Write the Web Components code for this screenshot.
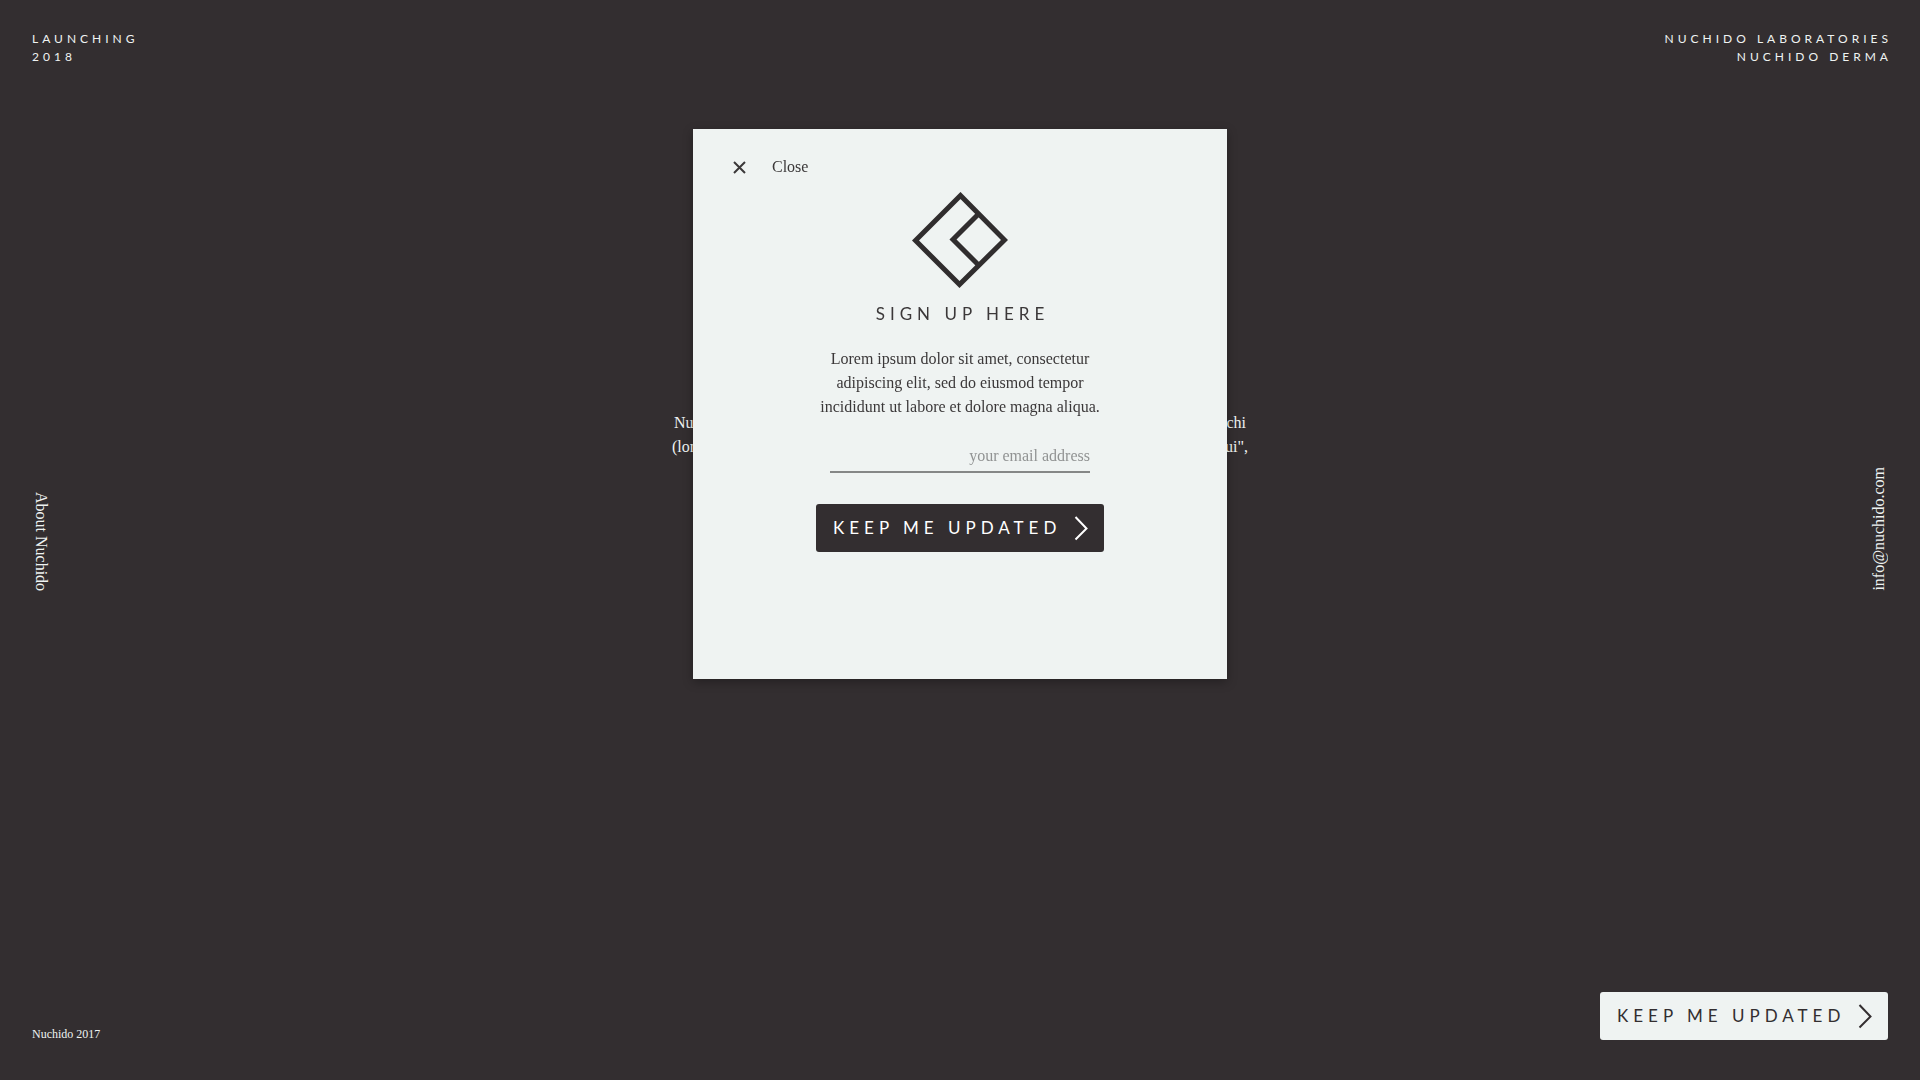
<!DOCTYPE html>
<html lang="en">
<head>
<meta charset="utf-8">
<title>Nuchido</title>
<style>
  :root {
    --ink: #332e30;
    --paper: #eff3f2;
    --serif: "Liberation Serif", serif;
    --sans: Lato, sans-serif;
  }
  body { margin: 0; background: var(--ink); color: var(--paper); font: 16px/24px var(--serif); }
</style>
</head>
<body>
<nuchido-page></nuchido-page>
<script>
class NuchidoElement extends HTMLElement {
  constructor() {
    super();
    this.attachShadow({ mode: "open" }).innerHTML = this.constructor.markup;
  }
}

class BrandLogo extends NuchidoElement {
  static markup = `
    <style>
      :host { display: block; width: 96px; height: 96px; }
      svg { display: block; width: 100%; height: 100%; }
    </style>
    <svg viewBox="0 0 96 96" fill="none" stroke="#302d2e" stroke-width="5" aria-hidden="true">
      <path d="M48.500 3.500 92.500 48 47.500 92.500 3.500 48.500Z"/>
      <path d="M66.500 22 41 47.500 66.500 73"/>
    </svg>`;
}

class CaptionText extends NuchidoElement {
  static markup = `
    <style>
      :host { display: block; font: 12px/18px var(--sans); letter-spacing: 4px; text-transform: uppercase; }
    </style>
    <slot></slot>`;
}

class SideLink extends NuchidoElement {
  static markup = `
    <style>
      :host { display: block; writing-mode: vertical-rl; line-height: 18px; }
      :host([up]) { transform: rotate(180deg); }
      a { color: inherit; text-decoration: none; }
    </style>
    <a href="#"><slot></slot></a>`;
  connectedCallback() {
    this.shadowRoot.querySelector("a").href = this.getAttribute("href") || "#";
  }
}

class UpdateButton extends NuchidoElement {
  static markup = `
    <style>
      :host { display: block; width: 288px; }
      button {
        display: flex; align-items: center; justify-content: space-between;
        box-sizing: border-box; width: 100%; height: 48px; padding: 0 16px 0 17px;
        border: 0; border-radius: 3px; cursor: pointer;
        background: var(--ink); color: #fff;
        font: 17px/24px var(--sans); letter-spacing: 5px; white-space: nowrap;
      }
      :host([light]) button { background: var(--paper); color: var(--ink); }
      svg { width: 14px; height: 26px; flex: none; }
    </style>
    <button type="button"><slot></slot>
      <svg viewBox="0 0 14 26" fill="none" stroke="currentColor" stroke-width="2" aria-hidden="true"><path d="M1.500 2 12.500 13.500 1.500 24.500"/></svg>
    </button>`;
}

class BrandIntro extends NuchidoElement {
  static markup = `
    <style>
      :host { display: flex; flex-direction: column; align-items: center; }
      div { display: flex; justify-content: space-between; width: 572px; }
      div + div { width: 576px; }
    </style>
    <div><span>Nu</span><span>chi</span></div>
    <div><span>(lon</span><span>ui",</span></div>`;
}

class SignupDialog extends NuchidoElement {
  static markup = `
    <style>
      :host {
        display: flex; flex-direction: column; align-items: center;
        box-sizing: border-box; width: 534px; min-height: 550px; padding: 26px 40px;
        background: var(--paper); color: #3b3839;
        box-shadow: 0 3px 10px rgba(0, 0, 0, .3);
      }
      .close {
        display: flex; align-items: center; gap: 26px; align-self: flex-start;
        padding: 0; border: 0; background: none; color: inherit; font: inherit; cursor: pointer;
      }
      .close svg { width: 13px; height: 13px; }
      brand-logo { margin-top: 13px; }
      h1 { margin: 14px 0 0; font: 17px/24px var(--sans); letter-spacing: 5px; padding-left: 5px; }
      p { margin: 21px 0 0; width: 288px; text-align: center; }
      input {
        box-sizing: border-box; width: 260px; height: 30px; margin: 24px 0 31px; padding: 0 0 2px;
        border: 0; border-bottom: 2px solid #858787; border-radius: 0; outline: 0;
        background: none; color: inherit; font: inherit; text-align: right;
      }
      input::placeholder { color: #919393; opacity: 1; }
    </style>
    <button class="close" type="button">
      <svg viewBox="0 0 13 13" stroke="currentColor" stroke-width="2" aria-hidden="true"><path d="M1 1 12 12M12 1 1 12"/></svg>Close
    </button>
    <brand-logo></brand-logo>
    <h1>SIGN UP HERE</h1>
    <p>Lorem ipsum dolor sit amet, consectetur adipiscing elit, sed do eiusmod tempor incididunt ut labore et dolore magna aliqua.</p>
    <input type="email" aria-label="your email address" placeholder="your email address">
    <update-button>KEEP ME UPDATED</update-button>`;
}

class NuchidoPage extends NuchidoElement {
  static markup = `
    <style>
      :host {
        display: grid; grid-template-rows: 1fr auto 1fr;
        box-sizing: border-box; min-height: 100vh; padding: 30px 32px 40px;
      }
      header { display: grid; grid-template-columns: 1fr auto 1fr; }
      header brand-intro { align-self: end; padding-bottom: 8px; }
      .right { text-align: right; margin-right: -4px; }
      nav { display: flex; justify-content: space-between; align-items: flex-end; padding-bottom: 12px; min-height: 120px; }
      footer { display: flex; justify-content: space-between; align-items: flex-end; }
      small { font-size: 12px; line-height: 12px; }
      .overlay { position: fixed; inset: 0; display: flex; justify-content: center; align-items: flex-start; padding-top: 129px; pointer-events: none; }
      signup-dialog { pointer-events: auto; }
    </style>
    <header>
      <caption-text>Launching<br>2018</caption-text>
      <brand-intro></brand-intro>
      <caption-text class="right">Nuchido Laboratories<br>Nuchido Derma</caption-text>
    </header>
    <nav>
      <side-link href="#about">About Nuchido</side-link>
      <side-link up href="mailto:info@nuchido.com">info@nuchido.com</side-link>
    </nav>
    <footer>
      <small>Nuchido 2017</small>
      <update-button light>KEEP ME UPDATED</update-button>
    </footer>
    <div class="overlay"><signup-dialog role="dialog" aria-label="Sign up here"></signup-dialog></div>`;
}

customElements.define("brand-logo", BrandLogo);
customElements.define("caption-text", CaptionText);
customElements.define("side-link", SideLink);
customElements.define("update-button", UpdateButton);
customElements.define("brand-intro", BrandIntro);
customElements.define("signup-dialog", SignupDialog);
customElements.define("nuchido-page", NuchidoPage);
</script>
</body>
</html>
